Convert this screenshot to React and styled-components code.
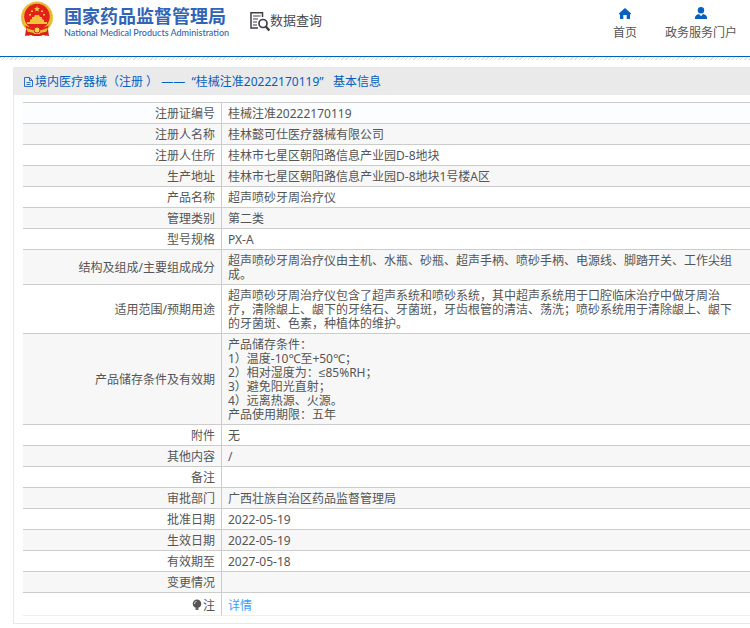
import React from "react";
import styled, { createGlobalStyle } from "styled-components";

const GlobalStyle = createGlobalStyle`
  *, *::before, *::after { box-sizing: border-box; }
  body {
    margin: 0;
    background: #fff;
    color: #555;
    font-family: "Noto Sans", "Liberation Sans", "Noto Sans CJK SC", sans-serif;
    font-size: 12px;
    line-height: 14px;
  }
`;

const Header = styled.header`
  display: flex;
  align-items: flex-start;
  height: 57px;
  padding: 0 13px 0 20px;
  border-bottom: 1px solid #0061bd;
`;

const Stripes = styled.div`
  height: 3px;
  background: repeating-linear-gradient(135deg, #e2e2e2 0 1px, #fff 1px 3px);
`;

const Brand = styled.a`
  display: flex;
  gap: 10px;
  color: #3164b4;
  text-decoration: none;
`;

const BrandText = styled.span`
  display: flex;
  flex-direction: column;
  padding-top: 4px;
`;

const BrandName = styled.strong`
  font-family: "Noto Sans CJK SC", sans-serif;
  font-size: 18px;
  line-height: 22px;
  font-weight: 700;
  white-space: nowrap;
`;

const BrandSub = styled.span`
  font-family: Lato, sans-serif;
  font-size: 9px;
  line-height: 13px;
  font-weight: 500;
  white-space: nowrap;
`;

const SectionTitle = styled.div`
  display: flex;
  margin: 11px auto 0 21px;
  color: #4a4a50;
  font-size: 13px;
  line-height: 18px;
  white-space: nowrap;
`;

const Nav = styled.nav`
  display: flex;
  gap: 28px;
  padding-top: 6px;
`;

const NavLink = styled.a`
  display: flex;
  flex-direction: column;
  align-items: center;
  gap: 5px;
  color: #555;
  line-height: 16px;
  text-decoration: none;
  white-space: nowrap;
`;

const Panel = styled.main`
  margin: 7px 0 4px 13px;
  padding-bottom: 7px;
  border: 1px solid #e8e8e8;
  border-width: 0 0 1px 1px;
`;

const PanelTitle = styled.h1`
  display: flex;
  align-items: center;
  gap: 1px;
  height: 28px;
  margin: 0 0 7px;
  padding: 2px 0 0 9px;
  background: #eaeaea;
  color: #0560bf;
  font-size: 12px;
  font-weight: 400;
  white-space: pre;
`;

const Table = styled.table`
  width: calc(100% - 9px);
  margin-left: 9px;
  border-collapse: separate;
  border-spacing: 0;
  border-top: 1px solid #ccc;
`;

const Row = styled.tr`
  background: #fff;
  &:first-child { background: #fbfdff; }
  &:nth-child(even) { background: #f7f7f7; }
  &:last-child > * {
    padding-top: 6px;
    border-bottom-color: #eee;
  }
`;

const Label = styled.th`
  width: 199px;
  height: 21px;
  padding: 4px 6px 2px;
  border: 1px solid #ccc;
  border-width: 0 1px 1px 0;
  font-weight: 400;
  text-align: right;
  vertical-align: middle;
`;

const Value = styled.td`
  padding: 4px 12px 2px 6px;
  border-bottom: 1px solid #ccc;
  white-space: pre-line;
`;

const DetailLink = styled.a`
  color: #409eff;
  text-decoration: none;
`;

const LabelIcon = styled.svg`
  vertical-align: -1px;
`;

const Emblem = () => (
  <svg width="34" height="38" viewBox="0 0 34 38" aria-hidden="true">
    <path d="M6 29 5 36l6-1 3 1h6l3-1 6 1-1-7z" fill="#d7221b" />
    <circle cx="17" cy="17.500" r="16" fill="#efc33c" />
    <circle cx="17" cy="17.500" r="14.500" fill="none" stroke="#dda52c" strokeDasharray="2 1" />
    <circle cx="17" cy="16.500" r="12.800" fill="#e32118" />
    <path d="m17 6 .8 2 2.200.1-1.700 1.400.6 2.100-1.900-1.200-1.900 1.200.6-2.100L14 8.100l2.200-.1zM11 10.500h2v1.500h-2zM21 10.500h2v1.500h-2zM9 14h2v1.500H9zM23 14h2v1.500h-2z" fill="#f4c944" />
    <path d="M12 19v-2h2l1-2h4l1 2h2v2l2 1v2h3v2H7v-2h3v-2z" fill="#f2c23c" />
    <path d="M5 25c4 4 20 4 24 0l-2 5H7z" fill="#d9251a" />
    <path d="M7 28c3 2 5 1 6 3h8c1-2 3-1 6-3v3l-5 3H12l-5-3z" fill="#efbd34" />
    <circle cx="17" cy="30" r="3" fill="#f5d152" stroke="#cf2b1d" />
    <path d="m9 32-1 4 3-2 2 2 1-3zm16 0 1 4-3-2-2 2-1-3z" fill="#d7221b" />
  </svg>
);

const SearchDocIcon = () => (
  <svg width="20" height="21" viewBox="0 0 20 21" fill="none" stroke="#3e3e48" aria-hidden="true">
    <path d="M12.500 6V1.700H1V17h7" strokeWidth="1.500" />
    <path d="M3 5h7.500M3 8h5M3 11h4M3 14h4" strokeWidth="1.200" />
    <circle cx="13" cy="12.500" r="4" strokeWidth="1.700" />
    <path d="m15.800 15.500 3.500 4" strokeWidth="2.400" />
  </svg>
);

const HomeIcon = () => (
  <svg width="14" height="14" viewBox="0 0 14 14" aria-hidden="true">
    <path d="M7 2 .8 7.500 2 8.700V13h3.300V9h3.400v4H12V8.700l1.200-1.200z" fill="#0561c2" />
  </svg>
);

const UserIcon = () => (
  <svg width="14" height="14" viewBox="0 0 14 14" fill="#0561c2" aria-hidden="true">
    <circle cx="7" cy="4.200" r="3.200" />
    <path d="M1 13v-1.500C1 9.500 3 8.500 5 8l2 2.200L9 8c2 .5 4 1.500 4 3.500V13z" />
  </svg>
);

const DocIcon = () => (
  <svg width="11" height="12" viewBox="0 0 11 12" fill="none" stroke="#2c71c4" aria-hidden="true">
    <path d="M1.500 1.500h5l3 3v6h-8zM6.500 1.500v3h3M3.500 6.500h4M3.500 8.500h4" />
  </svg>
);

const BulbIcon = () => (
  <LabelIcon width="11" height="12" viewBox="0 0 11 12" aria-hidden="true">
    <circle cx="5" cy="4.800" r="4.300" fill="#555" />
    <path d="M3.500 9h3v2h-3z" fill="#666" />
    <path d="M2.500 5c0-1.500.8-2.500 2-2.500" fill="none" stroke="#ddd" />
  </LabelIcon>
);

const records = [
  ["注册证编号", "桂械注准20222170119"],
  ["注册人名称", "桂林懿可仕医疗器械有限公司"],
  ["注册人住所", "桂林市七星区朝阳路信息产业园D-8地块"],
  ["生产地址", "桂林市七星区朝阳路信息产业园D-8地块1号楼A区"],
  ["产品名称", "超声喷砂牙周治疗仪"],
  ["管理类别", "第二类"],
  ["型号规格", "PX-A"],
  ["结构及组成/主要组成成分", "超声喷砂牙周治疗仪由主机、水瓶、砂瓶、超声手柄、喷砂手柄、电源线、脚踏开关、工作尖组成。"],
  ["适用范围/预期用途", "超声喷砂牙周治疗仪包含了超声系统和喷砂系统，其中超声系统用于口腔临床治疗中做牙周治疗，清除龈上、龈下的牙结石、牙菌斑，牙齿根管的清洁、荡洗；喷砂系统用于清除龈上、龈下的牙菌斑、色素，种植体的维护。"],
  ["产品储存条件及有效期", "产品储存条件：\n1）温度-10℃至+50℃；\n2）相对湿度为：≤85%RH；\n3）避免阳光直射；\n4）远离热源、火源。\n产品使用期限：五年"],
  ["附件", "无"],
  ["其他内容", "/"],
  ["备注", ""],
  ["审批部门", "广西壮族自治区药品监督管理局"],
  ["批准日期", "2022-05-19"],
  ["生效日期", "2022-05-19"],
  ["有效期至", "2027-05-18"],
  ["变更情况", ""],
];

export default function App() {
  return (
    <>
      <GlobalStyle />
      <Header>
        <Brand href="#">
          <Emblem />
          <BrandText>
            <BrandName>国家药品监督管理局</BrandName>
            <BrandSub>National Medical Products Administration</BrandSub>
          </BrandText>
        </Brand>
        <SectionTitle>
          <SearchDocIcon />
          数据查询
        </SectionTitle>
        <Nav>
          <NavLink href="#"><HomeIcon />首页</NavLink>
          <NavLink href="#"><UserIcon />政务服务门户</NavLink>
        </Nav>
      </Header>
      <Stripes />
      <Panel>
        <PanelTitle>
          <DocIcon />
          <span>境内医疗器械（注册 ） ——  “桂械注准20222170119”   基本信息</span>
        </PanelTitle>
        <Table>
          <tbody>
            {records.map(([label, value]) => (
              <Row key={label}>
                <Label scope="row">{label}</Label>
                <Value>{value}</Value>
              </Row>
            ))}
            <Row>
              <Label scope="row"><BulbIcon />注</Label>
              <Value><DetailLink href="#">详情</DetailLink></Value>
            </Row>
          </tbody>
        </Table>
      </Panel>
    </>
  );
}
